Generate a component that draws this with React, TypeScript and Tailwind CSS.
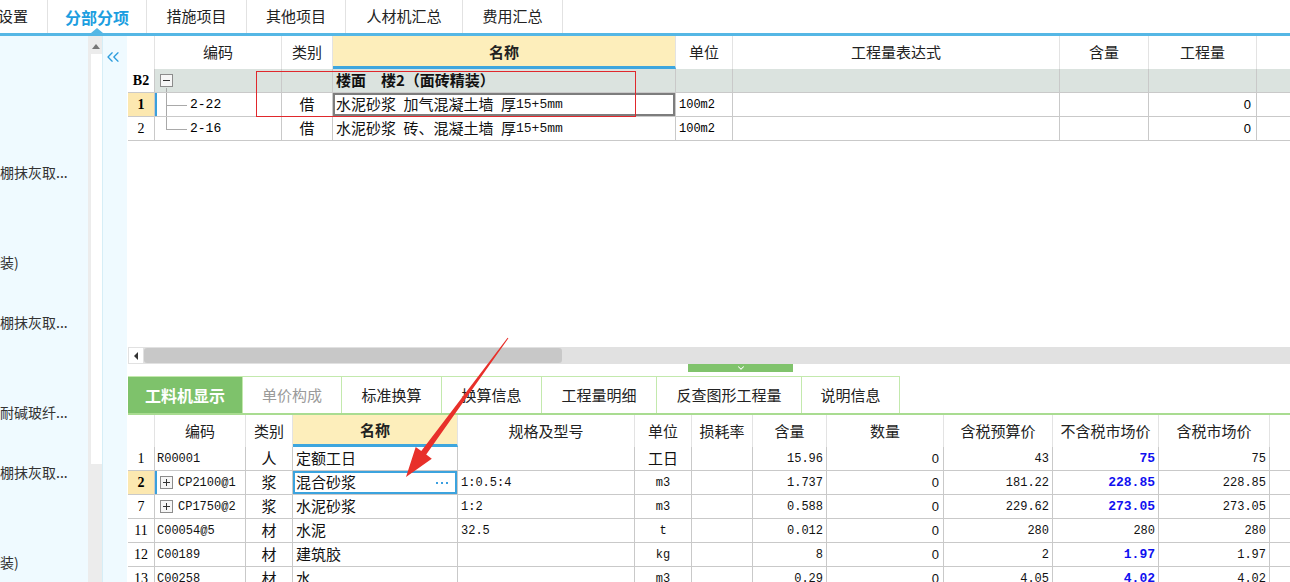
import React from 'react';
import { ChevronsLeft, ChevronDown } from 'lucide-react';

const CJK = "font-['Noto_Sans_CJK_SC',sans-serif]";
const MONO = "font-['Liberation_Mono','Noto_Sans_CJK_SC',monospace]";
const SERIF = "font-['Liberation_Serif','Noto_Sans_CJK_SC',serif]";
const SANS = "font-['Liberation_Sans','Noto_Sans_CJK_SC',sans-serif]";

// column widths, both grids start at x=128
const TOP_W = ['w-[27px]', 'w-[127px]', 'w-[51px]', 'w-[343px]', 'w-[57px]', 'w-[327px]', 'w-[89px]', 'w-[108px]', 'w-[60px]'];
const BOT_W = ['w-[27px]', 'w-[91px]', 'w-[47px]', 'w-[165px]', 'w-[177px]', 'w-[57px]', 'w-[61px]', 'w-[74px]', 'w-[117px]', 'w-[109px]', 'w-[106px]', 'w-[111px]', 'w-[60px]'];

const Cell: React.FC<{ w: string; className?: string; children?: React.ReactNode }> = ({ w, className = '', children }) => (
    <div className={`${w} shrink-0 h-full flex items-center overflow-hidden whitespace-nowrap border-r border-b border-[#c9c9c9] ${className}`}>
        {children}
    </div>
);

const HeadCell: React.FC<{ w: string; active?: boolean; children?: React.ReactNode }> = ({ w, active, children }) => (
    <div
        className={`${w} shrink-0 h-full flex items-center justify-center overflow-hidden whitespace-nowrap border-r border-[#e3e3e3] text-[15px] text-[#222] ${
            active ? 'bg-[#fdeebb] font-bold border-b-[3px] border-b-[#3ea6de] pt-[2px]' : 'bg-white'
        }`}
    >
        {children}
    </div>
);

const Box: React.FC<{ plus?: boolean }> = ({ plus }) => (
    <div className="relative w-[13px] h-[13px] shrink-0 border border-[#8c8c8c] bg-[#f6f6f6] flex items-center justify-center">
        <div className="w-[7px] h-px bg-[#333]" />
        {plus && <div className="absolute w-px h-[7px] bg-[#333]" />}
    </div>
);

// tree connector lines in the 编码 column
const Tree: React.FC<{ mode: 'start' | 'mid' | 'end' }> = ({ mode }) => (
    <svg className="absolute inset-0" width="127" height="24">
        {mode === 'start' && <line x1="11.5" y1="19" x2="11.5" y2="24" stroke="#a9a9a9" />}
        {mode === 'mid' && <line x1="11.5" y1="0" x2="11.5" y2="24" stroke="#a9a9a9" />}
        {mode === 'end' && <line x1="11.5" y1="0" x2="11.5" y2="12" stroke="#a9a9a9" />}
        {mode !== 'start' && <line x1="11" y1="12.5" x2="32" y2="12.5" stroke="#a9a9a9" />}
    </svg>
);

const TopTabs: React.FC = () => {
    const tabs = [
        { label: '分部分项', w: 'w-[99px]', active: true },
        { label: '措施项目', w: 'w-[100px]' },
        { label: '其他项目', w: 'w-[99px]' },
        { label: '人材机汇总', w: 'w-[117px]' },
        { label: '费用汇总', w: 'w-[100px]' },
    ];
    return (
        <>
            <div className={`flex h-[33px] bg-white ${CJK}`}>
                <div className="w-[48px] shrink-0 flex justify-end items-center pr-[19px] border-r border-[#e2e2e2]">
                    <span className="whitespace-nowrap text-[15px] text-[#222]">设置</span>
                </div>
                {tabs.map(t => (
                    <div
                        key={t.label}
                        className={`${t.w} shrink-0 relative flex items-center justify-center border-r border-[#e2e2e2] ${
                            t.active ? 'text-[16px] font-bold text-[#1c9ee0]' : 'text-[15px] text-[#222]'
                        }`}
                    >
                        {t.label}
                        {t.active && (
                            <div className="absolute bottom-0 left-1/2 -translate-x-1/2 border-x-[6px] border-x-transparent border-b-[5px] border-b-[#55b7e5]" />
                        )}
                    </div>
                ))}
            </div>
            <div className="h-[3px] bg-[#55b7e5]" />
        </>
    );
};

const Sidebar: React.FC = () => {
    const items: Record<number, string> = {
        4: '棚抹灰取...',
        7: '装)',
        9: '棚抹灰取...',
        12: '耐碱玻纤...',
        14: '棚抹灰取...',
        17: '装)',
    };
    return (
        <div className="w-[128px] shrink-0 flex">
            <div className={`w-[88px] shrink-0 bg-[#effaff] pt-px overflow-hidden ${CJK}`}>
                {Array.from({ length: 18 }).map((_, i) => (
                    <div key={i} className="h-[30px] flex items-center whitespace-nowrap text-[14px] text-[#333]">
                        {items[i]}
                    </div>
                ))}
            </div>
            <div className="w-[15px] shrink-0 bg-[#ececec] flex flex-col items-end">
                <div className="h-[18px] w-full flex items-center justify-center pt-[2px]">
                    <div className="border-x-[4px] border-x-transparent border-b-[5px] border-b-[#777]" />
                </div>
                <div className="w-[11px] h-[410px] bg-white mr-[1px]" />
            </div>
            <div className="w-[25px] shrink-0 bg-[#effaff] border-l border-[#d6eef7] pt-[11px] -ml-px">
                <ChevronsLeft size={20} strokeWidth={1.6} color="#2d9ddd" />
            </div>
        </div>
    );
};

const TopTable: React.FC = () => {
    const heads = ['', '编码', '类别', '名称', '单位', '工程量表达式', '含量', '工程量', ''];
    const lines = [
        { n: '1', code: '2-22', name: '水泥砂浆\u2002加气混凝土墙\u2002厚', mode: 'mid' as const, sel: true },
        { n: '2', code: '2-16', name: '水泥砂浆\u2002砖、混凝土墙\u2002厚', mode: 'end' as const, sel: false },
    ];
    return (
        <div className={`shrink-0 ${CJK}`}>
            <div className="flex h-[33px]">
                {heads.map((h, i) => (
                    <HeadCell key={i} w={TOP_W[i]} active={i === 3}>{h}</HeadCell>
                ))}
            </div>
            <div className="flex h-[24px]">
                <Cell w={TOP_W[0]} className={`justify-center bg-white font-bold text-[14px] ${SERIF}`}>B2</Cell>
                <Cell w={TOP_W[1]} className="relative bg-[#dbe3df] pl-[5px]">
                    <Box />
                    <Tree mode="start" />
                </Cell>
                <Cell w={TOP_W[2]} className="bg-[#dbe3df]" />
                <Cell w={TOP_W[3]} className="bg-[#dbe3df] pl-[3px] font-bold text-[15px] text-[#111]">楼面　楼2（面砖精装）</Cell>
                {TOP_W.slice(4).map((w, i) => (
                    <Cell key={i} w={w} className="bg-[#dbe3df]" />
                ))}
            </div>
            {lines.map(r => (
                <div key={r.n} className="flex h-[24px]">
                    <Cell w={TOP_W[0]} className={`justify-center text-[14px] ${SERIF} ${r.sel ? 'bg-[#fce8b0] font-bold' : 'bg-white'}`}>{r.n}</Cell>
                    <Cell w={TOP_W[1]} className={`relative pl-[35px] text-[13px] ${MONO} ${r.sel ? 'shadow-[inset_2px_0_0_#3aa0dc]' : ''}`}>
                        <Tree mode={r.mode} />
                        {r.code}
                    </Cell>
                    <Cell w={TOP_W[2]} className="justify-center text-[15px] text-[#111]">借</Cell>
                    <Cell w={TOP_W[3]} className={`pl-[3px] text-[15px] text-[#111] ${r.sel ? 'shadow-[inset_0_0_0_2px_#7d7d7d]' : ''}`}>
                        {r.name}
                        <span className={`text-[13px] ${MONO}`}>15+5mm</span>
                    </Cell>
                    <Cell w={TOP_W[4]} className={`pl-[3px] text-[12px] ${MONO}`}>100m2</Cell>
                    <Cell w={TOP_W[5]} />
                    <Cell w={TOP_W[6]} />
                    <Cell w={TOP_W[7]} className={`justify-end pr-[5px] text-[13px] ${SANS}`}>0</Cell>
                    <Cell w={TOP_W[8]} />
                </div>
            ))}
        </div>
    );
};

const HScroll: React.FC = () => (
    <div className="h-[17px] shrink-0 flex bg-[#e1e1e1]">
        <div className="w-[16px] shrink-0 bg-white border border-[#e1e1e1] flex items-center justify-center">
            <div className="border-y-[4px] border-y-transparent border-r-[4px] border-r-[#333]" />
        </div>
        <div className="w-[418px] shrink-0 bg-[#c8c8c8] rounded-[3px] my-px" />
    </div>
);

const Splitter: React.FC = () => (
    <div className="h-[12px] shrink-0">
        <div className="ml-[560px] w-[105px] h-[8px] bg-[#80c36c] flex items-center justify-center">
            <ChevronDown size={10} strokeWidth={2.5} color="#ffffff" />
        </div>
    </div>
);

const BottomTabs: React.FC = () => {
    const tabs = [
        { label: '工料机显示', w: 'w-[115px]', cls: 'bg-[#7ec26b] text-white font-bold text-[16px]' },
        { label: '单价构成', w: 'w-[99px]', cls: 'text-[#9a9a9a] text-[15px]' },
        { label: '标准换算', w: 'w-[100px]', cls: 'text-[#222] text-[15px]' },
        { label: '换算信息', w: 'w-[100px]', cls: 'text-[#222] text-[15px]' },
        { label: '工程量明细', w: 'w-[115px]', cls: 'text-[#222] text-[15px]' },
        { label: '反查图形工程量', w: 'w-[145px]', cls: 'text-[#222] text-[15px]' },
        { label: '说明信息', w: 'w-[98px]', cls: 'text-[#222] text-[15px]' },
    ];
    return (
        <div className={`flex h-[39px] shrink-0 border-b-2 border-[#a9dc91] ${CJK}`}>
            {tabs.map(t => (
                <div key={t.label} className={`${t.w} shrink-0 flex items-center justify-center border-t border-r border-[#c3e9ad] ${t.cls}`}>
                    {t.label}
                </div>
            ))}
        </div>
    );
};

type BotRow = {
    n: string; code: string; plus?: boolean; cat: string; name: string; spec: string; unit: string;
    qty: string; p1: string; p2: string; p3: string; blue: boolean; sel?: boolean;
};

const BOT_ROWS: BotRow[] = [
    { n: '1', code: 'R00001', cat: '人', name: '定额工日', spec: '', unit: '工日', qty: '15.96', p1: '43', p2: '75', p3: '75', blue: true },
    { n: '2', code: 'CP2100@1', plus: true, cat: '浆', name: '混合砂浆', spec: '1:0.5:4', unit: 'm3', qty: '1.737', p1: '181.22', p2: '228.85', p3: '228.85', blue: true, sel: true },
    { n: '7', code: 'CP1750@2', plus: true, cat: '浆', name: '水泥砂浆', spec: '1:2', unit: 'm3', qty: '0.588', p1: '229.62', p2: '273.05', p3: '273.05', blue: true },
    { n: '11', code: 'C00054@5', cat: '材', name: '水泥', spec: '32.5', unit: 't', qty: '0.012', p1: '280', p2: '280', p3: '280', blue: false },
    { n: '12', code: 'C00189', cat: '材', name: '建筑胶', spec: '', unit: 'kg', qty: '8', p1: '2', p2: '1.97', p3: '1.97', blue: true },
    { n: '13', code: 'C00258', cat: '材', name: '水', spec: '', unit: 'm3', qty: '0.29', p1: '4.05', p2: '4.02', p3: '4.02', blue: true },
];

const BottomTable: React.FC = () => {
    const heads = ['', '编码', '类别', '名称', '规格及型号', '单位', '损耗率', '含量', '数量', '含税预算价', '不含税市场价', '含税市场价', ''];
    const num = `justify-end pr-[3px] text-[12px] text-[#111] ${MONO}`;
    return (
        <div className={`shrink-0 ${CJK}`}>
            <div className="flex h-[32px]">
                {heads.map((h, i) => (
                    <HeadCell key={i} w={BOT_W[i]} active={i === 3}>
                        {i === 12 ? <span className="pl-[22px]">税率</span> : h}
                    </HeadCell>
                ))}
            </div>
            {BOT_ROWS.map(r => (
                <div key={r.n} className="flex h-[24px]">
                    <Cell w={BOT_W[0]} className={`justify-center text-[14px] ${SERIF} ${r.sel ? 'bg-[#fce8b0] font-bold' : 'bg-white'}`}>{r.n}</Cell>
                    <Cell w={BOT_W[1]} className={`pl-[2px] text-[12px] text-[#111] ${MONO} ${r.sel ? 'shadow-[inset_2px_0_0_#3aa0dc]' : ''}`}>
                        {r.plus && (
                            <span className="ml-[3px] mr-[5px]">
                                <Box plus />
                            </span>
                        )}
                        {r.code}
                    </Cell>
                    <Cell w={BOT_W[2]} className="justify-center text-[15px] text-[#111]">{r.cat}</Cell>
                    <Cell w={BOT_W[3]} className={`pl-[3px] pr-[9px] justify-between text-[15px] text-[#111] ${r.sel ? 'shadow-[inset_0_0_0_2px_#3ba3de]' : ''}`}>
                        <span>{r.name}</span>
                        {r.sel && (
                            <span className="flex gap-[3px]">
                                <span className="w-[2px] h-[2px] bg-[#3b9fe0]" />
                                <span className="w-[2px] h-[2px] bg-[#3b9fe0]" />
                                <span className="w-[2px] h-[2px] bg-[#3b9fe0]" />
                            </span>
                        )}
                    </Cell>
                    <Cell w={BOT_W[4]} className={`pl-[3px] text-[12px] text-[#111] ${MONO}`}>{r.spec}</Cell>
                    <Cell w={BOT_W[5]} className={`justify-center text-[#111] ${r.unit === '工日' ? 'text-[15px]' : `text-[12px] ${MONO}`}`}>{r.unit}</Cell>
                    <Cell w={BOT_W[6]} />
                    <Cell w={BOT_W[7]} className={num}>{r.qty}</Cell>
                    <Cell w={BOT_W[8]} className={`justify-end pr-[4px] text-[13px] text-[#111] ${SANS}`}>0</Cell>
                    <Cell w={BOT_W[9]} className={num}>{r.p1}</Cell>
                    <Cell w={BOT_W[10]} className={r.blue ? `justify-end pr-[3px] text-[13px] font-bold text-[#1010f0] ${MONO}` : num}>{r.p2}</Cell>
                    <Cell w={BOT_W[11]} className={num}>{r.p3}</Cell>
                    <Cell w={BOT_W[12]} />
                </div>
            ))}
        </div>
    );
};

const App: React.FC = () => (
    <div className={`relative w-[1290px] h-[582px] overflow-hidden bg-white ${CJK}`}>
        <TopTabs />
        <div className="flex h-[546px]">
            <Sidebar />
            <div className="w-[1162px] shrink-0 flex flex-col overflow-hidden">
                <TopTable />
                <div className="h-[206px] shrink-0" />
                <HScroll />
                <Splitter />
                <BottomTabs />
                <BottomTable />
            </div>
        </div>

        {/* annotation overlays */}
        <div className="absolute left-[256px] top-[71px] w-[380px] h-[46px] border border-[#e0282c] pointer-events-none" />
        <svg className="absolute left-0 top-0 pointer-events-none" width="1290" height="582">
            <polygon
                points="508.4,338.3 426.2,454.6 431.8,458.7 406,477 415.7,446.9 421.3,451.0 507.6,337.7"
                fill="#e8302a"
            />
        </svg>
    </div>
);

export default App;
